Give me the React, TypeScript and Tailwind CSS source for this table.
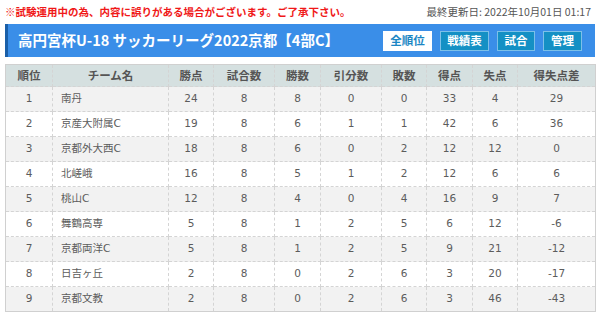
import React from "react";

interface Row {
  rank: number;
  team: string;
  pts: number;
  played: number;
  won: number;
  drawn: number;
  lost: number;
  gf: number;
  ga: number;
  gd: number;
}

const rows: Row[] = [
  { rank: 1, team: "南丹", pts: 24, played: 8, won: 8, drawn: 0, lost: 0, gf: 33, ga: 4, gd: 29 },
  { rank: 2, team: "京産大附属C", pts: 19, played: 8, won: 6, drawn: 1, lost: 1, gf: 42, ga: 6, gd: 36 },
  { rank: 3, team: "京都外大西C", pts: 18, played: 8, won: 6, drawn: 0, lost: 2, gf: 12, ga: 12, gd: 0 },
  { rank: 4, team: "北嵯峨", pts: 16, played: 8, won: 5, drawn: 1, lost: 2, gf: 12, ga: 6, gd: 6 },
  { rank: 5, team: "桃山C", pts: 12, played: 8, won: 4, drawn: 0, lost: 4, gf: 16, ga: 9, gd: 7 },
  { rank: 6, team: "舞鶴高専", pts: 5, played: 8, won: 1, drawn: 2, lost: 5, gf: 6, ga: 12, gd: -6 },
  { rank: 7, team: "京都両洋C", pts: 5, played: 8, won: 1, drawn: 2, lost: 5, gf: 9, ga: 21, gd: -12 },
  { rank: 8, team: "日吉ヶ丘", pts: 2, played: 8, won: 0, drawn: 2, lost: 6, gf: 3, ga: 20, gd: -17 },
  { rank: 9, team: "京都文教", pts: 2, played: 8, won: 0, drawn: 2, lost: 6, gf: 3, ga: 46, gd: -43 },
];

// column widths taken from the screenshot
const cols = [
  { label: "順位", w: "w-[47px]" },
  { label: "チーム名", w: "w-[116px]" },
  { label: "勝点", w: "w-[45px]" },
  { label: "試合数", w: "w-[61px]" },
  { label: "勝数", w: "w-[46px]" },
  { label: "引分数", w: "w-[61px]" },
  { label: "敗数", w: "w-[45px]" },
  { label: "得点", w: "w-[46px]" },
  { label: "失点", w: "w-[45px]" },
  { label: "得失点差", w: "w-[78px]" },
];

const cell = "border border-dashed border-[#d4d4d4] text-center";

export default function App() {
  return (
    <div
      className="w-[600px] h-[315px] bg-white px-[5px] overflow-hidden"
      style={{ fontFamily: '"DejaVu Sans", "Noto Sans CJK JP", sans-serif' }}
    >
      {/* notice + last update */}
      <div className="flex items-center justify-between h-[24px] pr-[4px]">
        <p
          className="text-[10.5px] font-bold text-[#f01818] leading-none"
          style={{ fontFamily: '"Noto Sans CJK JP", sans-serif' }}
        >
          ※試験運用中の為、内容に誤りがある場合がございます。ご了承下さい。
        </p>
        <p
          className="text-[10.5px] text-[#555] leading-none"
          style={{ fontFamily: '"Noto Sans CJK JP", sans-serif' }}
        >
          最終更新日: 2022年10月01日 01:17
        </p>
      </div>

      {/* title bar */}
      <div className="flex items-center justify-between h-[33px] bg-[#3a8ee8] border-l-[3px] border-[#1a5fa8] pl-[10px] pr-[13px]">
        <h1
          className="text-[14.5px] font-bold text-white leading-none"
          style={{ fontFamily: '"Noto Sans CJK JP", sans-serif' }}
        >
          高円宮杯U-18 サッカーリーグ2022京都【4部C】
        </h1>
        <div
          className="flex gap-[8px] text-[11.5px] font-bold leading-none"
          style={{ fontFamily: '"Noto Sans CJK JP", sans-serif' }}
        >
          <span className="flex items-center justify-center w-[49px] h-[20px] bg-white text-[#1b86c4]">全順位</span>
          <span className="flex items-center justify-center w-[49px] h-[20px] bg-[#1490c4] border border-[#7cc0e8] text-white">戦績表</span>
          <span className="flex items-center justify-center w-[38px] h-[20px] bg-[#1490c4] border border-[#7cc0e8] text-white">試合</span>
          <span className="flex items-center justify-center w-[39px] h-[20px] bg-[#1490c4] border border-[#7cc0e8] text-white">管理</span>
        </div>
      </div>

      {/* standings */}
      <table className="mt-[7px] w-[590px] border-collapse border border-[#d0d0d0] table-fixed text-[#5c5c5c]">
        <thead>
          <tr className="h-[22px] bg-[#d5e0e0]">
            {cols.map((c) => (
              <th
                key={c.label}
                className={`${c.w} ${cell} text-[11.5px] font-bold text-[#555]`}
                style={{ fontFamily: '"Noto Sans CJK JP", sans-serif' }}
              >
                {c.label}
              </th>
            ))}
          </tr>
        </thead>
        <tbody className="text-[10.5px]">
          {rows.map((r, i) => (
            <tr key={r.rank} className={`h-[25px] ${i % 2 === 0 ? "bg-[#f2f2f2]" : "bg-white"}`}>
              <td className={cell}>{r.rank}</td>
              <td className={`${cell} !text-left pl-[8px]`}>{r.team}</td>
              <td className={cell}>{r.pts}</td>
              <td className={cell}>{r.played}</td>
              <td className={cell}>{r.won}</td>
              <td className={cell}>{r.drawn}</td>
              <td className={cell}>{r.lost}</td>
              <td className={cell}>{r.gf}</td>
              <td className={cell}>{r.ga}</td>
              <td className={cell}>{r.gd}</td>
            </tr>
          ))}
        </tbody>
      </table>
    </div>
  );
}
